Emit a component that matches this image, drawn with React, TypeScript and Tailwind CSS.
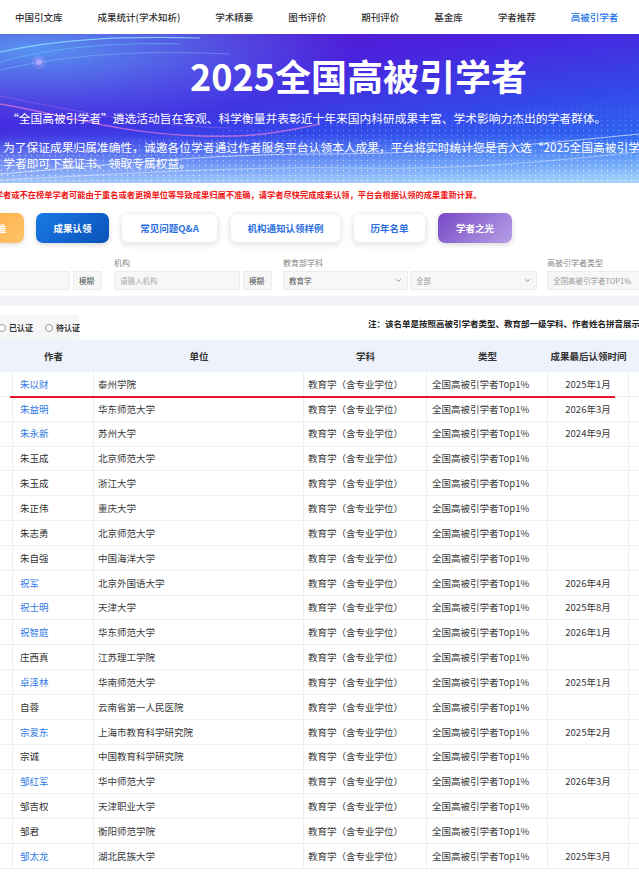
import { ChevronDown } from 'lucide-react'

type Row = { name: string; unit: string; time: string; linked: boolean }

const rows: Row[] = [
  { name: '朱以财', unit: '泰州学院', time: '2025年1月', linked: true },
  { name: '朱益明', unit: '华东师范大学', time: '2026年3月', linked: true },
  { name: '朱永新', unit: '苏州大学', time: '2024年9月', linked: true },
  { name: '朱玉成', unit: '北京师范大学', time: '', linked: false },
  { name: '朱玉成', unit: '浙江大学', time: '', linked: false },
  { name: '朱正伟', unit: '重庆大学', time: '', linked: false },
  { name: '朱志勇', unit: '北京师范大学', time: '', linked: false },
  { name: '朱自强', unit: '中国海洋大学', time: '', linked: false },
  { name: '祝军', unit: '北京外国语大学', time: '2026年4月', linked: true },
  { name: '祝士明', unit: '天津大学', time: '2025年8月', linked: true },
  { name: '祝智庭', unit: '华东师范大学', time: '2026年1月', linked: true },
  { name: '庄西真', unit: '江苏理工学院', time: '', linked: false },
  { name: '卓泽林', unit: '华南师范大学', time: '2025年1月', linked: true },
  { name: '自蓉', unit: '云南省第一人民医院', time: '', linked: false },
  { name: '宗爱东', unit: '上海市教育科学研究院', time: '2025年2月', linked: true },
  { name: '宗诚', unit: '中国教育科学研究院', time: '', linked: false },
  { name: '邹红军', unit: '华中师范大学', time: '2026年3月', linked: true },
  { name: '邹吉权', unit: '天津职业大学', time: '', linked: false },
  { name: '邹君', unit: '衡阳师范学院', time: '', linked: false },
  { name: '邹太龙', unit: '湖北民族大学', time: '2025年3月', linked: true },
]

const navItems = ['中国引文库', '成果统计(学术知析)', '学术精要', '图书评价', '期刊评价', '基金库', '学者推荐', '高被引学者']

function BannerArt() {
  return (
    <svg className="absolute inset-0 w-full h-full" viewBox="0 0 639 149" preserveAspectRatio="none">
      <defs>
        <pattern id="dots" width="6" height="5" patternUnits="userSpaceOnUse">
          <circle cx="1.5" cy="1.5" r="0.7" fill="#ffffff" />
        </pattern>
        <linearGradient id="fadeUp" x1="0" y1="0" x2="0" y2="1">
          <stop offset="0" stopColor="#fff" stopOpacity="0" />
          <stop offset="1" stopColor="#fff" stopOpacity="0.9" />
        </linearGradient>
        <mask id="waveMask">
          <path d="M0 149 L0 120 C120 110 200 95 300 92 C400 88 500 80 639 60 L639 149 Z" fill="url(#fadeUp)" />
        </mask>
        <radialGradient id="glowL" cx="0.05" cy="0.1" r="0.5">
          <stop offset="0" stopColor="#58c8ff" stopOpacity="0.7" />
          <stop offset="1" stopColor="#58c8ff" stopOpacity="0" />
        </radialGradient>
        <linearGradient id="bottomGlow" x1="0" y1="0" x2="0" y2="1">
          <stop offset="0" stopColor="#9fd4ff" stopOpacity="0" />
          <stop offset="1" stopColor="#bfe4ff" stopOpacity="0.8" />
        </linearGradient>
      </defs>
      <rect x="0" y="0" width="639" height="149" fill="url(#glowL)" />
      <rect x="0" y="100" width="639" height="49" fill="url(#bottomGlow)" />
      <rect x="0" y="0" width="639" height="149" fill="url(#dots)" mask="url(#waveMask)" opacity="0.8" />
      <path d="M0 18 C60 5 120 2 200 4" stroke="#8fe0ff" strokeWidth="1.2" fill="none" opacity="0.8" />
      <path d="M0 28 C50 14 110 8 180 10" stroke="#6fd0ff" strokeWidth="0.8" fill="none" opacity="0.6" />
      <path d="M0 36 C70 20 140 16 230 20" stroke="#a0e8ff" strokeWidth="0.6" fill="none" opacity="0.5" />
      <path d="M0 70 C60 80 120 100 200 102 C260 104 290 96 320 90" stroke="#e27bd8" strokeWidth="1.4" fill="none" opacity="0.7" />
      <path d="M0 62 C80 78 150 92 230 94" stroke="#c77be8" strokeWidth="0.7" fill="none" opacity="0.5" />
      <path d="M0 140 C100 132 200 120 320 120 C430 120 520 112 639 100" stroke="#ffffff" strokeWidth="1" fill="none" opacity="0.6" />
      <path d="M0 146 C120 140 240 132 360 134 C470 136 560 126 639 118" stroke="#ffffff" strokeWidth="0.8" fill="none" opacity="0.5" />
      <circle cx="39" cy="28" r="3" fill="#b9a8ff" opacity="0.9" />
      <circle cx="39" cy="28" r="7" fill="#b9a8ff" opacity="0.25" />
    </svg>
  )
}

function Select({ w, text, light }: { w: string; text: string; light?: boolean }) {
  return (
    <div className={`${w} h-[19px] shrink-0 flex items-center justify-between px-[5px] bg-[#f7f7f7] border border-[#ececec] text-[7.5px] ${light ? 'text-[#999]' : 'text-[#555]'}`}>
      <span className="whitespace-nowrap">{text}</span>
      <ChevronDown size={7} strokeWidth={2.5} className="text-[#666]" />
    </div>
  )
}

export default function App() {
  return (
    <div
      lang="zh-CN"
      className="w-[639px] h-[874px] overflow-hidden bg-white font-['Noto_Sans_CJK_SC','Liberation_Sans',sans-serif] text-[#333]"
    >
      {/* 상단 네비 */}
      <nav className="h-[34px] flex items-center gap-[35px] pl-[15px] text-[9.5px] font-medium whitespace-nowrap">
        {navItems.map((item) => (
          <span key={item} className={item === '高被引学者' ? 'text-[#1a73e8]' : 'text-[#333]'}>
            {item}
          </span>
        ))}
      </nav>

      {/* 배너 */}
      <div className="relative h-[149px] overflow-hidden bg-[linear-gradient(172deg,#5a14cc_0%,#4b22dc_30%,#3348ea_60%,#2f6df2_85%,#4a95f6_100%)]">
        <BannerArt />
        <div className="relative text-white">
          <h1 className="pt-[23px] ml-[190px] text-[36px] leading-[36px] font-bold whitespace-nowrap">2025全国高被引学者</h1>
          <p className="mt-[17px] pl-[7px] text-[11.75px] leading-[16px] whitespace-nowrap">
            “全国高被引学者”遴选活动旨在客观、科学衡量并表彰近十年来国内科研成果丰富、学术影响力杰出的学者群体。
          </p>
          <p className="mt-[13px] pl-[3px] text-[11.75px] leading-[16px] whitespace-nowrap">
            为了保证成果归属准确性，诚邀各位学者通过作者服务平台认领本人成果，平台将实时统计您是否入选“2025全国高被引学者”，入选
            <br />
            学者即可下载证书、领取专属权益。
          </p>
        </div>
      </div>

      {/* 안내 */}
      <div className="h-[22px] flex items-center -ml-[30px] text-[8.26px] font-bold text-[#f21818] whitespace-nowrap">
        未入选学者或不在榜单学者可能由于重名或者更换单位等导致成果归属不准确，请学者尽快完成成果认领，平台会根据认领的成果重新计算。
      </div>

      {/* 버튼 */}
      <div className="mt-[8px] flex gap-[12px] -ml-[49px] text-[9.5px] font-bold whitespace-nowrap">
        <button className="w-[73px] h-[30px] shrink-0 rounded-[7px] text-white bg-[linear-gradient(135deg,#ffa23a,#ffc46a)] shadow-[0_2px_5px_rgba(0,0,0,0.12)]">
          遴选标准
        </button>
        <button className="w-[73px] h-[30px] shrink-0 rounded-[7px] text-white bg-[linear-gradient(135deg,#1a7ae6,#0a52b8)] shadow-[0_2px_5px_rgba(0,0,0,0.15)]">
          成果认领
        </button>
        <button className="w-[97px] h-[30px] shrink-0 rounded-[7px] text-[#2d6fe0] bg-white border border-[#f0f0f0] shadow-[0_2px_6px_rgba(0,0,0,0.12)]">
          常见问题Q&amp;A
        </button>
        <button className="w-[111px] h-[30px] shrink-0 rounded-[7px] text-[#2d6fe0] bg-white border border-[#f0f0f0] shadow-[0_2px_6px_rgba(0,0,0,0.12)]">
          机构通知认领样例
        </button>
        <button className="w-[73px] h-[30px] shrink-0 rounded-[7px] text-[#2d6fe0] bg-white border border-[#f0f0f0] shadow-[0_2px_6px_rgba(0,0,0,0.12)]">
          历年名单
        </button>
        <button className="w-[74px] h-[30px] shrink-0 rounded-[7px] text-white bg-[linear-gradient(135deg,#7748c6,#b7a0e6)] shadow-[0_2px_5px_rgba(0,0,0,0.15)]">
          学者之光
        </button>
      </div>

      {/* 필터 */}
      <div className="mt-[14px] flex -ml-[50px] text-[8px] text-[#888]">
        <div className="shrink-0 mr-[12px]">
          <div className="h-[12px] leading-[12px]">作者</div>
          <div className="mt-[2px] flex gap-[3px]">
            <div className="w-[120px] h-[19px] bg-[#f7f7f7] border border-[#ececec]" />
            <Select w="w-[29px]" text="模糊" />
          </div>
        </div>
        <div className="shrink-0 mr-[11px]">
          <div className="h-[12px] leading-[12px]">机构</div>
          <div className="mt-[2px] flex gap-[3px]">
            <div className="w-[126px] h-[19px] flex items-center px-[5px] bg-[#f7f7f7] border border-[#ececec] text-[7.5px] text-[#aaa]">
              请输入机构
            </div>
            <Select w="w-[29px]" text="模糊" />
          </div>
        </div>
        <div className="shrink-0 mr-[10px]">
          <div className="h-[12px] leading-[12px]">教育部学科</div>
          <div className="mt-[2px] flex gap-[2px]">
            <Select w="w-[125px]" text="教育学" />
            <Select w="w-[127px]" text="全部" light />
          </div>
        </div>
        <div className="shrink-0">
          <div className="h-[12px] leading-[12px]">高被引学者类型</div>
          <div className="mt-[2px] flex">
            <Select w="w-[130px]" text="全国高被引学者TOP1%" light />
          </div>
        </div>
      </div>
      <div className="mt-[6px] h-[10px] bg-[#f1f2f8]" />

      {/* 인증 상태 + 주석 */}
      <div className="mt-[9px] h-[25px] flex items-start">
        <div className="w-[81px] h-[25px] shrink-0 flex items-center -ml-[2px] gap-[12px] bg-[#f6f6f8] text-[8px] font-bold text-[#333] whitespace-nowrap">
          <span className="flex items-center gap-[3px]">
            <span className="w-[8px] h-[8px] rounded-full border border-[#999] bg-white" />
            已认证
          </span>
          <span className="flex items-center gap-[3px]">
            <span className="w-[8px] h-[8px] rounded-full border border-[#999] bg-white" />
            待认证
          </span>
        </div>
        <div className="ml-[289px] mt-[2px] text-[8.5px] leading-[12px] font-bold text-[#222] whitespace-nowrap">
          注：该名单是按照高被引学者类型、教育部一级学科、作者姓名拼音展示，请在列表中查找
        </div>
      </div>

      {/* 표 */}
      <div className="relative text-[9.5px]">
        <div className="grid grid-cols-[13px_81px_210px_123px_121px_81px_40px] h-[32px] bg-[#edf2fb] font-bold text-[#333] items-center text-center whitespace-nowrap">
          <div />
          <div>作者</div>
          <div>单位</div>
          <div>学科</div>
          <div>类型</div>
          <div>成果最后认领时间</div>
          <div />
        </div>
        {rows.map((r, i) => (
          <div
            key={i}
            className="grid grid-cols-[13px_81px_210px_123px_121px_81px_40px] h-[24.85px] border-b border-[#f0f0f0] text-[#3a3a3a] whitespace-nowrap"
          >
            <div className="border-r border-[#efefef]" />
            <div className={`flex items-center pl-[7px] border-r border-[#efefef] ${r.linked ? 'text-[#2f7ae5]' : 'text-[#333]'}`}>
              {r.name}
            </div>
            <div className="flex items-center pl-[4px] border-r border-[#efefef]">{r.unit}</div>
            <div className="flex items-center pl-[4px] border-r border-[#efefef]">教育学（含专业学位）</div>
            <div className="flex items-center pl-[5px] border-r border-[#efefef]">全国高被引学者Top1%</div>
            <div className="flex items-center justify-center border-r border-[#efefef]">{r.time}</div>
            <div />
          </div>
        ))}
        <div className="absolute top-[56px] left-[10px] w-[605px] h-[2px] bg-[#e5132e]" />
      </div>
    </div>
  )
}
